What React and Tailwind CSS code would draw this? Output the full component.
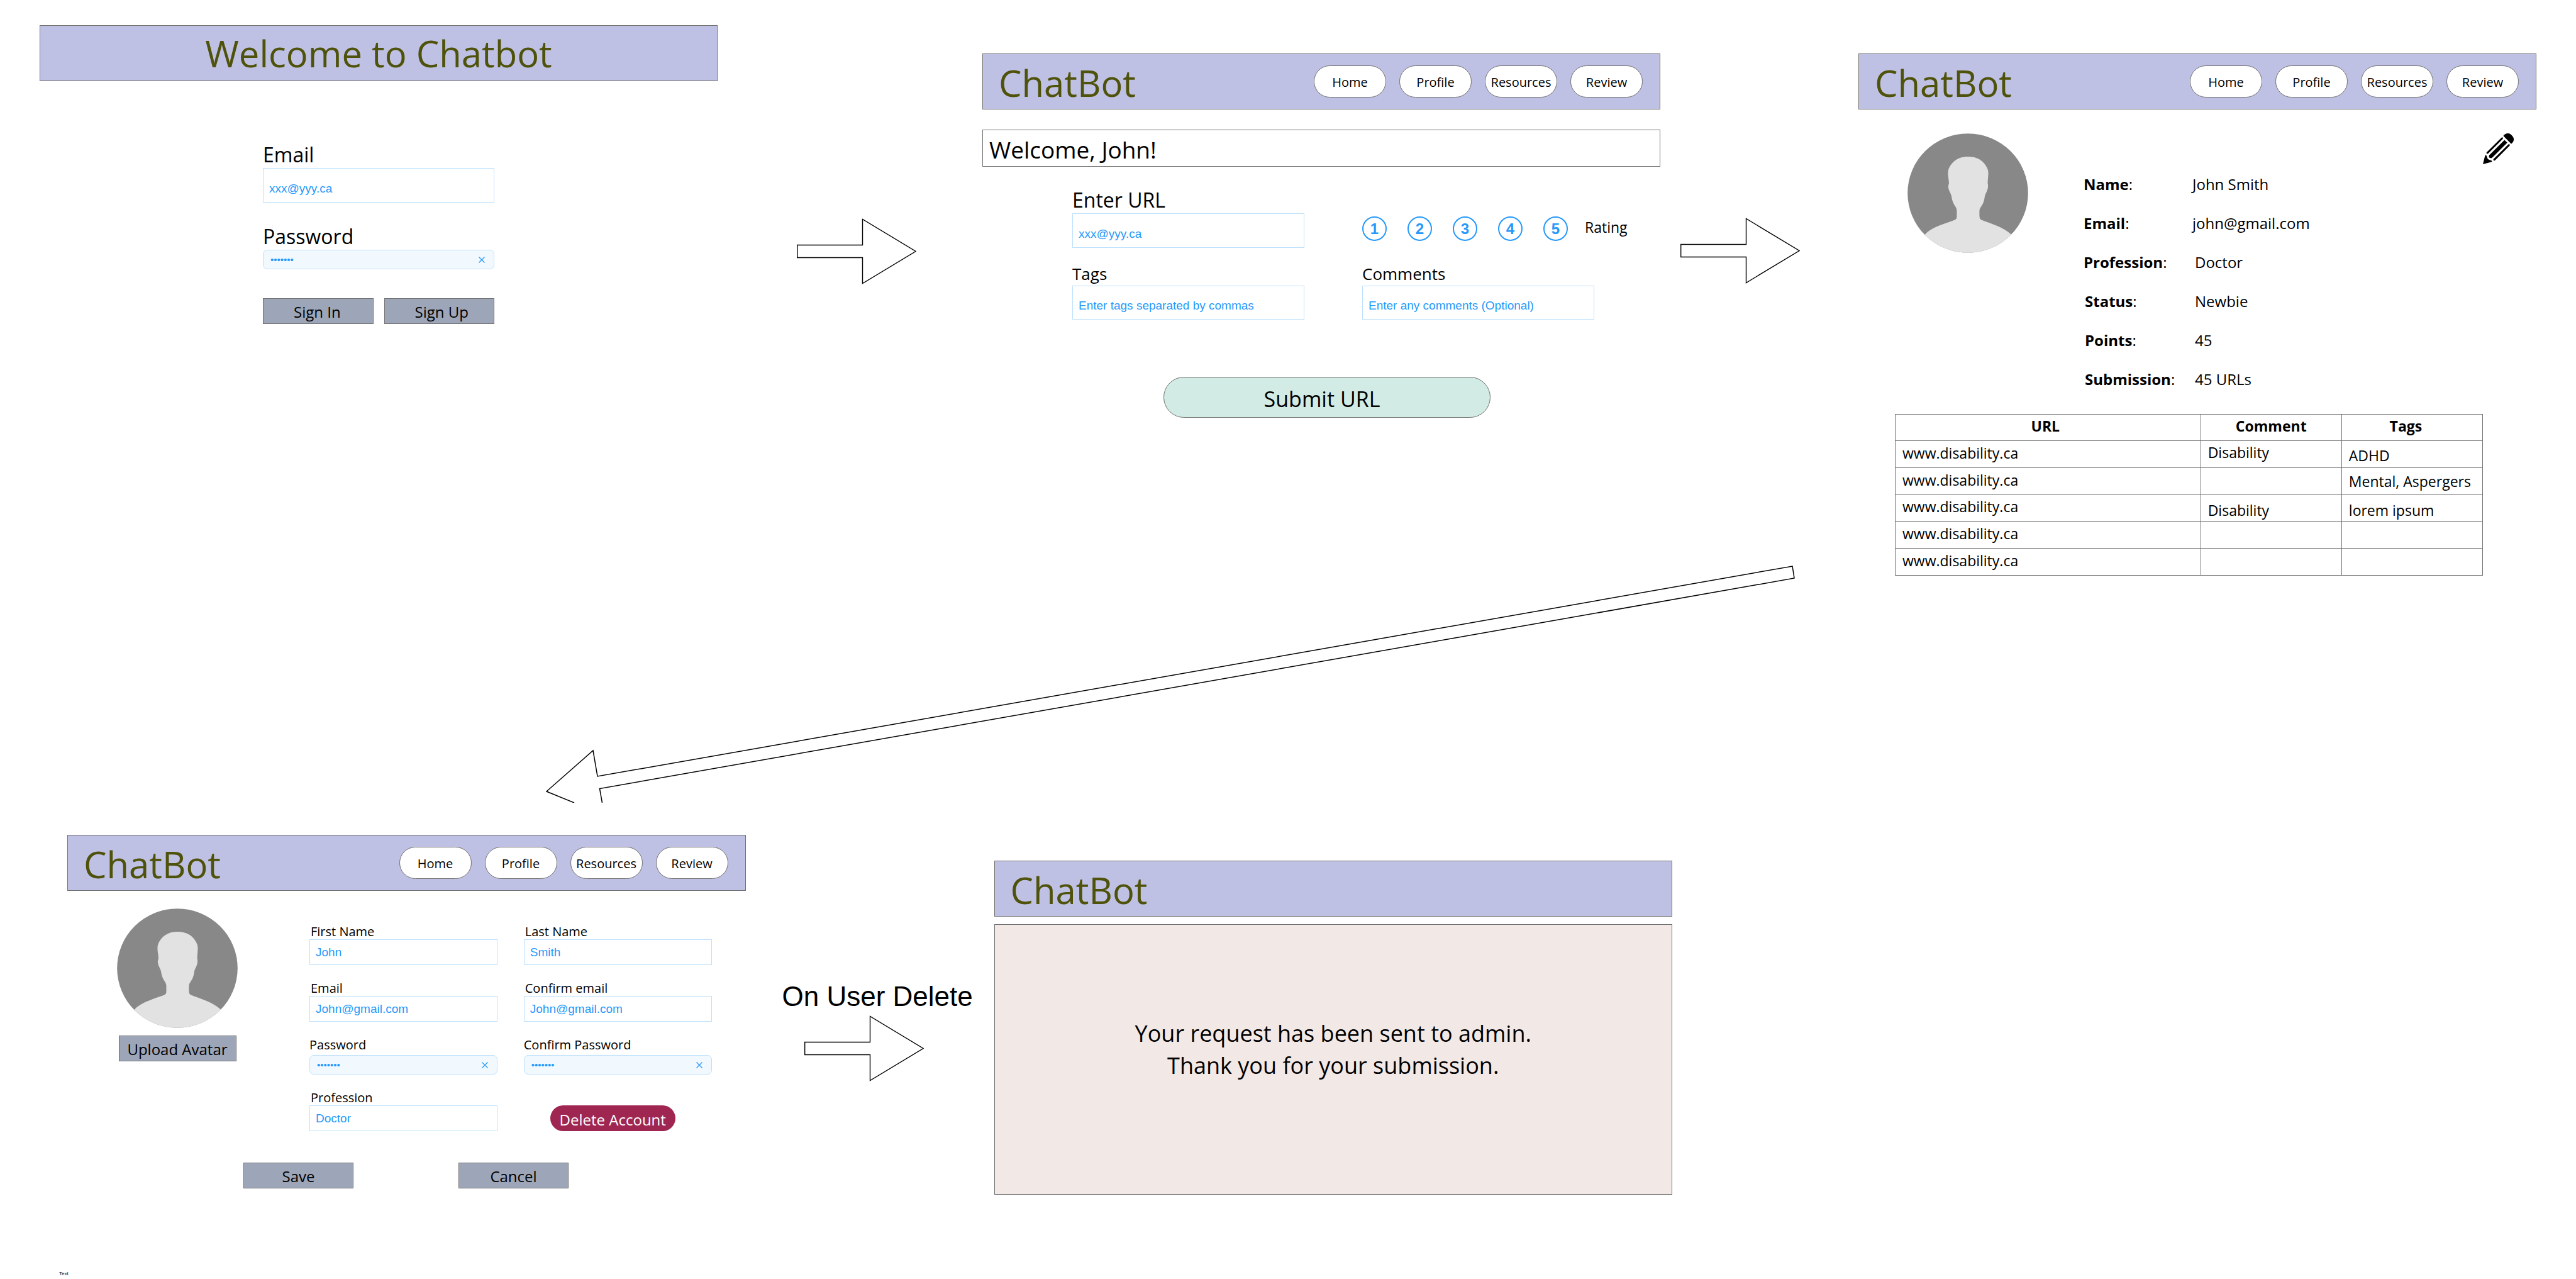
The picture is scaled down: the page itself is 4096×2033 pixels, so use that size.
import React, { useId } from "react";

const SANS = "font-['Open_Sans','Noto_Sans',sans-serif]";
const ARIAL = "font-['Liberation_Sans',Arial,sans-serif]";

function Logo() {
  return (
    <h2 className="pt-1 text-[58px] leading-[80px] text-[#4f520a]">ChatBot</h2>
  );
}

function Header({ nav = true }) {
  return (
    <header className="flex h-[89px] items-center justify-between border border-[#707070] bg-[#bfc1e4] pr-[27px] pl-[25px]">
      <Logo />
      {nav && (
        <nav className="flex gap-[21px]">
          {["Home", "Profile", "Resources", "Review"].map((name) => (
            <button
              key={name}
              type="button"
              className="flex h-[51px] w-[115px] items-center justify-center rounded-full border border-[#707070] bg-white pt-0.5 text-[20px] leading-6 text-black"
            >
              {name}
            </button>
          ))}
        </nav>
      )}
    </header>
  );
}

function Arrow() {
  return (
    <svg viewBox="0 0 190 105" className="h-[105px] w-[190px]" fill="none" stroke="black" strokeWidth="1.4">
      <path d="M.7 42.5H104.500V1.500L189 52.500 104.500 103.500V62.500H.7Z" />
    </svg>
  );
}

function LongArrow() {
  return (
    <svg viewBox="0 0 1990 377" className="h-[377px] w-[1990px]" fill="none" stroke="black" strokeWidth="1.5">
      <path d="M45 377L1 359 75 294 82 335 1982 1 1985 20 85.500 354.500 89.500 377" />
    </svg>
  );
}

function Avatar() {
  return (
    <svg viewBox="168 54 918 908" className="h-[190px] w-[192px]" role="img" aria-label="Avatar">
      <defs>
        <clipPath id="avatar-disc">
          <ellipse cx="627" cy="508" rx="458" ry="453" />
        </clipPath>
      </defs>
      <g clipPath="url(#avatar-disc)">
        <rect x="168" y="54" width="918" height="908" fill="#888888" />
        <path
          fill="#e2e2e2"
          d="M629 231C700 231 740 262 764 300C781 325 784 345 782 370L778 422C776 434 782 440 780 462C776 495 757 515 755 538C750 575 740 593 726 613C716 628 715 635 715 650V680C717 698 718 705 730 711C810 742 900 768 957 822L1000 962H258L301 822C340 775 430 745 510 718C535 710 543 705 543 685V640C541 622 535 615 524 598C510 570 506 555 503 532C496 505 480 490 478 458C478 445 485 440 483 425C481 395 476 380 476 352C477 325 487 307 500 290C530 252 570 231 629 231Z"
        />
      </g>
    </svg>
  );
}

function Pencil() {
  return (
    <svg viewBox="75 54 234 234" className="h-[49px] w-[49px]" fill="black">
      <path d="M230 73C243 52 270 50 285 61C296 70 303 77 308 90C311 104 309 119 290 134Z" />
      <path d="M215 87C224 79 232 89 225 97L116 206C107 214 97 204 104 197Z" />
      <path d="M239 104L260 125L145 239C128 249 113 231 125 217Z" />
      <path d="M267 139C275 132 284 141 276 149L168 258C160 266 148 256 157 248Z" />
      <path d="M92 220C98 218 104 222 105 230C107 247 118 257 134 258C142 260 146 266 143 270L75 288Z" />
    </svg>
  );
}

function Field({ label, labelClass, inputClass, ...input }) {
  const id = useId();
  return (
    <div className="flex flex-col">
      <label htmlFor={id} className={labelClass}>{label}</label>
      <input
        id={id}
        {...input}
        className={`${ARIAL} w-full border border-[#bce0fd] bg-white px-[9px] text-[19px] text-[#2699fb] outline-none placeholder:text-[#2699fb] placeholder:opacity-100 ${inputClass}`}
      />
    </div>
  );
}

function PasswordField({ label, labelClass }) {
  const id = useId();
  return (
    <div className="flex flex-col">
      <label htmlFor={id} className={labelClass}>{label}</label>
      <div className="flex h-[31px] items-center rounded-[7px] border border-[#bce0fd] bg-[#f1f9ff] pr-[14px] pl-[11px]">
        <input
          id={id}
          type="password"
          defaultValue="chatbot"
          className={`${ARIAL} min-w-0 flex-1 bg-transparent text-[15px] leading-5 text-[#2699fb] outline-none`}
        />
        <button type="button" aria-label="Clear">
          <svg viewBox="0 0 10 10" className="h-[10px] w-[10px]" stroke="#2699fb" strokeWidth="1.3">
            <path d="M.5.5L9.500 9.500M9.500.5L.5 9.500" />
          </svg>
        </button>
      </div>
    </div>
  );
}

const GREY_BUTTON = "h-[41px] border border-[#707070] bg-[#9da5b8] pt-0.5 text-[24px] leading-8 text-black";
const BIG_LABEL = "mb-px self-start text-[32px] leading-10";
const MID_LABEL = "mb-[3px] self-start text-[26px] leading-8";
const SMALL_LABEL = "self-start pl-0.5 text-[20px] leading-6";

function SignIn() {
  return (
    <section className="mt-10">
      <header className="flex h-[89px] items-center justify-center border border-[#707070] bg-[#bfc1e4]">
        <h1 className="text-[58px] leading-[80px] text-[#4f520a]">Welcome to Chatbot</h1>
      </header>
      <form className="mx-auto mt-[97px] w-[368px]">
        <Field label="Email" labelClass={BIG_LABEL} inputClass="h-[55px] pt-[10px]" placeholder="xxx@yyy.ca" />
        <div className="mt-[34px]">
          <PasswordField label="Password" labelClass={BIG_LABEL} />
        </div>
        <div className="mt-[46px] grid grid-cols-2 gap-[17px]">
          <button type="button" className={`${GREY_BUTTON} pl-12 text-left`}>Sign In</button>
          <button type="button" className={`${GREY_BUTTON} pl-12 text-left`}>Sign Up</button>
        </div>
      </form>
    </section>
  );
}

function SubmitUrl() {
  return (
    <section className="mt-[85px]">
      <Header />
      <p className="mt-8 flex h-[59px] items-center border border-[#707070] bg-white pt-1 pl-[10px] text-[37px] leading-[48px]">
        Welcome, John!
      </p>
      <form>
        <div className="mt-[33px] grid grid-cols-2 gap-x-[92px] gap-y-[25px] pr-[105px] pl-[143px]">
          <Field label="Enter URL" labelClass={BIG_LABEL} inputClass="h-[55px] pt-[10px]" placeholder="xxx@yyy.ca" />
          <fieldset className="flex items-end pb-[11px]">
            <div className="flex items-center gap-[33px]">
              {[1, 2, 3, 4, 5].map((n) => (
                <label
                  key={n}
                  className={`${ARIAL} relative flex h-[39px] w-[39px] shrink-0 items-center justify-center rounded-full border-2 border-[#2699fb] text-[24px] leading-6 font-bold text-[#2699fb]`}
                >
                  <input type="radio" name="rating" value={n} className="sr-only" />
                  {n}
                </label>
              ))}
              <span className="-ml-1.5 pb-1.5 text-[23px] leading-7">Rating</span>
            </div>
          </fieldset>
          <Field label="Tags" labelClass={MID_LABEL} inputClass="h-[54px] pt-[10px]" placeholder="Enter tags separated by commas" />
          <Field label="Comments" labelClass={MID_LABEL} inputClass="h-[54px] pt-[10px]" placeholder="Enter any comments (Optional)" />
        </div>
        <div className="mt-[91px] pr-[270px] pl-[288px]">
          <button
            type="button"
            className="h-[65px] w-full rounded-full border border-[#707070] bg-[#d2ebe4] pt-1 pr-4 text-[34px] leading-[48px]"
          >
            Submit URL
          </button>
        </div>
      </form>
    </section>
  );
}

const DETAILS = [
  ["Name", "John Smith", "", ""],
  ["Email", "john@gmail.com", "", ""],
  ["Profession", "Doctor", "", "pl-1"],
  ["Status", "Newbie", "pl-0.5", "pl-1"],
  ["Points", "45", "pl-0.5", "pl-1"],
  ["Submission", "45 URLs", "pl-0.5", "pl-1"],
];

const ROWS = [
  ["Disability", "pb-1.5", "ADHD", "pt-1"],
  ["", "", "Mental, Aspergers", ""],
  ["Disability", "pt-2", "lorem ipsum", "pt-2"],
  ["", "", "", ""],
  ["", "", "", ""],
];

function Profile() {
  return (
    <section className="mt-[85px]">
      <Header />
      <div className="flex items-start pt-[38px] pr-9 pl-[78px]">
        <Avatar />
        <dl className="mt-[50px] ml-[88px] grid grid-cols-[173px_auto] text-[24px] leading-[62px]">
          {DETAILS.map(([term, value, termPad, valuePad]) => (
            <React.Fragment key={term}>
              <dt className={termPad}><b className="font-bold">{term}</b>:</dt>
              <dd className={valuePad}>{value}</dd>
            </React.Fragment>
          ))}
        </dl>
        <button type="button" aria-label="Edit profile" className="ml-auto">
          <Pencil />
        </button>
      </div>
      <div className="mt-6 pr-[85px] pl-[58px]">
        <table className="h-[257px] w-full table-fixed border-collapse text-[23px] leading-6 [&_td]:border [&_td]:border-[#707070] [&_td]:px-[11px] [&_th]:border [&_th]:border-[#707070] [&_th]:pb-1.5 [&_tr]:h-[42px]">
          <thead>
            <tr>
              <th className="w-[52%] pr-2">URL</th>
              <th className="w-[24%]">Comment</th>
              <th className="w-[24%] pr-5">Tags</th>
            </tr>
          </thead>
          <tbody>
            {ROWS.map(([comment, commentPad, tags, tagsPad], i) => (
              <tr key={i}>
                <td className="pb-1">www.disability.ca</td>
                <td className={commentPad}>{comment}</td>
                <td className={`whitespace-nowrap ${tagsPad}`}>{tags}</td>
              </tr>
            ))}
          </tbody>
        </table>
      </div>
    </section>
  );
}

function EditProfile() {
  return (
    <section>
      <Header />
      <form>
        <div className="flex items-start pr-[54px] pl-[79px]">
          <div className="mt-7 flex flex-col items-center">
            <Avatar />
            <button type="button" className={`${GREY_BUTTON} mt-3 w-[187px]`}>Upload Avatar</button>
          </div>
          <div className="mt-[53px] ml-[114px] grid flex-1 grid-cols-2 gap-x-[42px] gap-y-[25px]">
            <Field label="First Name" labelClass={SMALL_LABEL} inputClass="h-[41px]" defaultValue="John" />
            <Field label="Last Name" labelClass={SMALL_LABEL} inputClass="h-[41px]" defaultValue="Smith" />
            <Field label="Email" labelClass={SMALL_LABEL} inputClass="h-[41px]" defaultValue="John@gmail.com" />
            <Field label="Confirm email" labelClass={SMALL_LABEL} inputClass="h-[41px]" defaultValue="John@gmail.com" />
            <PasswordField label="Password" labelClass="mb-1 self-start text-[20px] leading-6" />
            <PasswordField label="Confirm Password" labelClass="mb-1 self-start text-[20px] leading-6" />
            <Field label="Profession" labelClass={SMALL_LABEL} inputClass="h-[41px]" defaultValue="Doctor" />
            <div className="flex items-end pl-[42px]">
              <button type="button" className="h-[41px] w-[199px] rounded-full bg-[#a02652] pt-1 text-[24px] leading-8 text-white">
                Delete Account
              </button>
            </div>
          </div>
        </div>
        <div className="mt-[50px] flex gap-[167px] pl-[280px]">
          <button type="button" className={`${GREY_BUTTON} w-[175px]`}>Save</button>
          <button type="button" className={`${GREY_BUTTON} w-[175px]`}>Cancel</button>
        </div>
      </form>
    </section>
  );
}

function Confirmation() {
  return (
    <section className="mt-[41px]">
      <Header nav={false} />
      <div className="mt-3 flex h-[430px] items-center justify-center border border-[#707070] bg-[#f2e8e6] pb-8 text-center text-[36px] leading-[51px]">
        <p>
          Your request has been sent to admin.
          <br />
          Thank you for your submission.
        </p>
      </div>
    </section>
  );
}

export default function App() {
  return (
    <main className={`${SANS} bg-white text-black`}>
      <div className="grid grid-cols-[1fr_421px_1fr_315px_1fr] px-[63px]">
        <SignIn />
        <div className="pt-[347px] pl-[126px]"><Arrow /></div>
        <SubmitUrl />
        <div className="pt-[346px] pl-8"><Arrow /></div>
        <Profile />
      </div>
      <div className="-mt-4 pl-[868px]"><LongArrow /></div>
      <div className="mt-[51px] grid grid-cols-[1fr_395px_1fr_1437px] pl-[107px]">
        <EditProfile />
        <div className="pt-[235px]">
          <p className={`${ARIAL} pl-[58px] text-[44px] leading-[44px] whitespace-nowrap`}>On User Delete</p>
          <div className="mt-2 pl-[93px]"><Arrow /></div>
        </div>
        <Confirmation />
      </div>
      <p className={`${ARIAL} mt-[121px] pl-[94px] text-[8px] leading-[10px]`}>Text</p>
    </main>
  );
}
